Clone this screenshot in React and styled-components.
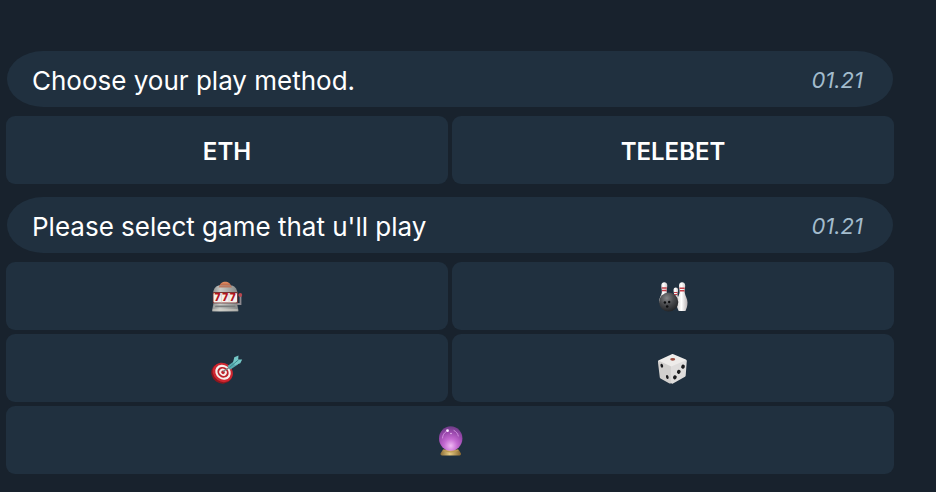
import React from 'react'
import styled, { createGlobalStyle } from 'styled-components'

const GlobalStyle = createGlobalStyle`
    *{
        box-sizing: border-box;
    }
    body{
        margin: 0;
        background: #18222d;
        font-family: Inter, Roboto, sans-serif;
        color: #fff;
    }
`;

function SlotMachine() {
    return (
        <Emoji viewBox="0 0 32 32" aria-hidden="true">
            <defs>
                <linearGradient id="slotBody" x1="0" y1="0" x2="1" y2="0">
                    <stop offset="0" stopColor="#8f9291" />
                    <stop offset=".3" stopColor="#c9cbc7" />
                    <stop offset="1" stopColor="#858887" />
                </linearGradient>
                <linearGradient id="slotDome" x1="0" y1="0" x2="0" y2="1">
                    <stop offset="0" stopColor="#e99468" />
                    <stop offset="1" stopColor="#a9573f" />
                </linearGradient>
            </defs>
            <path d="M26 24h3.5V16" fill="none" stroke="#8d8990" strokeWidth="1.8" />
            <circle cx="29.3" cy="15" r="1.9" fill="#b8474f" />
            <path d="M8.500 6.500c0-6.500 11.500-6.500 11.500 0z" fill="url(#slotDome)" />
            <path d="M2 13.500C2.500 8 5.500 5.500 8.500 5.500H20c3 0 6 2.500 6.500 8v10H2z" fill="url(#slotBody)" />
            <path d="M8.500 5.500H20l1 2H7.500z" fill="#b9775f" />
            <rect x="1.800" y="12" width="25" height="11.500" rx="1" fill="#7d3432" />
            <rect x="2.500" y="13" width="23.500" height="9.500" rx="1" fill="#f4f0eb" />
            <path d="M10.500 13v9.500M18 13v9.500" stroke="#c9c4c1" strokeWidth=".5" />
            <g fill="#b3161f" fontFamily="Inter, sans-serif" fontWeight="900" fontSize="10" textAnchor="middle">
                <text x="6.6" y="21.400">7</text>
                <text x="14.2" y="21.400">7</text>
                <text x="21.8" y="21.400">7</text>
            </g>
            <path d="M2.500 23.500h23.500L27.500 30.500c0 .6-.3 1-1 1H2c-.7 0-1-.4-1-1z" fill="url(#slotBody)" />
            <path d="M4.500 25.500h19.500l.8 1.800H3.800z" fill="#7a7d7d" />
            <path d="M1.800 30h25" stroke="#d5d2c9" strokeWidth="1" />
        </Emoji>
    )
}

function Bowling() {
    return (
        <Emoji viewBox="0 0 32 32" aria-hidden="true">
            <defs>
                <linearGradient id="pin" x1="0" y1="0" x2="1" y2="0">
                    <stop offset="0" stopColor="#d5d1d0" />
                    <stop offset=".45" stopColor="#fff" />
                    <stop offset="1" stopColor="#b9b3b5" />
                </linearGradient>
                <radialGradient id="ball" cx=".4" cy=".3" r=".7">
                    <stop offset="0" stopColor="#858688" />
                    <stop offset=".5" stopColor="#4b4c4f" />
                    <stop offset="1" stopColor="#242528" />
                </radialGradient>
            </defs>
            <path d="M4.300 5.500c0-4.300 6-4.300 6 0 0 2.500-1 4.500-.5 7 .5 3 2.500 6 2 10H2.300c-.5-4 2-7 2.500-10 .3-2.500-.5-4.500-.5-7z" fill="url(#pin)" />
            <path d="M4.800 8h5M5 10.500h4.600" stroke="#c5404a" strokeWidth="1.400" />
            <path d="M16.500 10c0-3.300 4.600-3.300 4.600 0 0 2-1 3.500-.5 5.500.5 2.500 2 5 1.500 8h-7c-.5-3 1.400-5.500 1.900-8 .3-2-.5-3.500-.5-5.500z" fill="url(#pin)" />
            <path d="M17 12.500h3.600M17 14.500h3.600" stroke="#c5404a" strokeWidth="1" />
            <path d="M22 5.500c0-4.300 6.200-4.300 6.200 0 0 2.700-1 4.500-.4 7.500.5 3 2.700 5.500 2.700 9.500 0 3.500-1 6-2 8.500h-6.800c-1.200-2.500-2.200-5-2.200-8.500 0-4 2.500-6.500 3-9.500.4-3-.5-4.800-.5-7.500z" fill="url(#pin)" />
            <path d="M22.500 8.200h5.200M22.800 10.800h4.700" stroke="#c5404a" strokeWidth="1.400" />
            <circle cx="11.700" cy="22" r="9.600" fill="url(#ball)" />
            <circle cx="7.900" cy="22.500" r="1.200" fill="#0c0d0f" />
            <circle cx="12.200" cy="22" r="1.200" fill="#0c0d0f" />
            <circle cx="10.200" cy="26.500" r="1.300" fill="#0c0d0f" />
        </Emoji>
    )
}

function Dart() {
    return (
        <Emoji viewBox="0 0 32 32" aria-hidden="true">
            <g transform="rotate(35 11.500 20.500)">
                <ellipse cx="11.500" cy="21.800" rx="10.800" ry="9.800" fill="#8d171e" />
                <ellipse cx="11.700" cy="20.300" rx="10.500" ry="9.300" fill="#cf2630" />
                <ellipse cx="11.800" cy="20" rx="8.100" ry="7.100" fill="#f6eeeb" />
                <ellipse cx="11.800" cy="20" rx="5.900" ry="5.100" fill="#bd222b" />
                <ellipse cx="11.800" cy="20" rx="3.900" ry="3.400" fill="#f6eeeb" />
                <ellipse cx="11.800" cy="20" rx="1.900" ry="1.700" fill="#bd222b" />
            </g>
            <path d="M12 19.500l7-4.500" stroke="#6f8487" strokeWidth="1.200" />
            <path d="M16.500 14l7.600-5.600 2.900 4-8 5.400z" fill="#58aab0" />
            <path d="M22 10.500l1.300-5.300 4.200-1.700-.3 3.900 4 .2-1.900 3.700-5.300 2z" fill="#74c6c6" />
            <path d="M18.500 15.500l9-7.700" stroke="#358388" strokeWidth=".9" />
        </Emoji>
    )
}

function Dice() {
    return (
        <Emoji viewBox="0 0 32 32" aria-hidden="true">
            <g strokeWidth="2.800" strokeLinejoin="round">
                <path d="M2.400 9.600L15.300 3.400 28.300 8.900 14.300 14.200z" fill="#eeecea" stroke="#eeecea" />
                <path d="M2.400 10.600L13.200 15.500v14.700L4.200 25.300z" fill="#d2d0ce" stroke="#d2d0ce" />
                <path d="M15.300 15.500L28.300 10l-1 13.500-12 6.700z" fill="#dfdddc" stroke="#dfdddc" />
            </g>
            <ellipse cx="15.700" cy="7.300" rx="2.500" ry="1.400" fill="#9a4b3d" />
            <g fill="#1b1b1d">
                <ellipse cx="4.800" cy="13.700" rx="1.300" ry="2" transform="rotate(-15 4.800 13.700)" />
                <ellipse cx="10.300" cy="25" rx="1.300" ry="2" transform="rotate(-15 10.300 25)" />
                <ellipse cx="26" cy="14.700" rx="1.800" ry="2.100" transform="rotate(25 26 14.700)" />
                <ellipse cx="21.800" cy="19.800" rx="1.800" ry="2.100" transform="rotate(25 21.800 19.800)" />
                <ellipse cx="17.900" cy="25.300" rx="1.800" ry="2.100" transform="rotate(25 17.900 25.300)" />
            </g>
        </Emoji>
    )
}

function CrystalBall() {
    return (
        <Emoji viewBox="0 0 32 32" aria-hidden="true">
            <defs>
                <radialGradient id="crystal" cx=".5" cy=".8" r=".8">
                    <stop offset="0" stopColor="#f0b8f4" />
                    <stop offset=".35" stopColor="#c56bd2" />
                    <stop offset=".7" stopColor="#9a48ad" />
                    <stop offset="1" stopColor="#6d3c86" />
                </radialGradient>
                <linearGradient id="gold" x1="0" y1="0" x2="1" y2="0">
                    <stop offset="0" stopColor="#8a6c38" />
                    <stop offset=".45" stopColor="#e8cc83" />
                    <stop offset="1" stopColor="#84642f" />
                </linearGradient>
            </defs>
            <path d="M9 25.500h15.500l2.500 4c.2 1.200-.5 2-1.500 2H8c-1 0-1.700-.8-1.500-2z" fill="url(#gold)" />
            <ellipse cx="16.700" cy="14.500" rx="11.700" ry="12.200" fill="url(#crystal)" />
            <path d="M9.500 26c4 2.600 10.500 2.600 14.500 0" fill="none" stroke="#bf9b55" strokeWidth="1.300" />
            <circle cx="13.500" cy="6.700" r="1.400" fill="#fbe9ff" />
            <path d="M8.500 14c.2-3 1.500-5 3.500-6.300M20 6.500c2.300 1.200 3.800 3 4.300 5.500" fill="none" stroke="#cf8fdd" strokeWidth="1" strokeLinecap="round" />
            <circle cx="17" cy="9.500" r=".7" fill="#f8d8fc" />
        </Emoji>
    )
}

const messages = [
    {
        text: 'Choose your play method.',
        time: '01.21',
        buttons: [
            { label: 'ETH' },
            { label: 'TELEBET' }
        ]
    },
    {
        text: "Please select game that u'll play",
        time: '01.21',
        buttons: [
            { label: 'Slot machine', icon: <SlotMachine /> },
            { label: 'Bowling', icon: <Bowling /> },
            { label: 'Darts', icon: <Dart /> },
            { label: 'Dice', icon: <Dice /> },
            { label: 'Crystal ball', icon: <CrystalBall />, wide: true }
        ]
    }
]

function Message({ text, time, buttons }) {
    return (
        <MessageStyled>
            <Bubble>
                <p>{text}</p>
                <time>{time}</time>
            </Bubble>
            <Keyboard>
                {buttons.map(({ label, icon, wide }) => (
                    <KeyButton
                        key={label}
                        type="button"
                        $wide={wide}
                        aria-label={icon ? label : undefined}
                    >
                        {icon || <KeyLabel>{label}</KeyLabel>}
                    </KeyButton>
                ))}
            </Keyboard>
        </MessageStyled>
    )
}

function App() {
    return (
        <>
            <GlobalStyle />
            <Chat>
                {messages.map(message => (
                    <Message key={message.text} {...message} />
                ))}
            </Chat>
        </>
    )
}

const Chat = styled.main`
    display: flex;
    flex-direction: column;
    gap: 13px;
    padding: 51px 42px 18px 6px;
`;

const MessageStyled = styled.section`
    display: flex;
    flex-direction: column;
    gap: 9px;
`;

const Bubble = styled.div`
    display: flex;
    align-items: flex-start;
    justify-content: space-between;
    gap: 24px;
    min-height: 56px;
    margin: 0 1px;
    padding: 12px 30px 8px 25px;
    border-radius: 36px / 28px;
    background: #20303f;
    p{
        margin: 0;
        font-size: 26px;
        line-height: 36px;
    }
    time{
        font-size: 22px;
        font-style: italic;
        line-height: 34px;
        color: #a3bccd;
    }
`;

const Keyboard = styled.div`
    display: grid;
    grid-template-columns: 1fr 1fr;
    gap: 4px;
`;

const KeyButton = styled.button`
    display: flex;
    align-items: center;
    justify-content: center;
    height: 68px;
    padding: 0 16px;
    grid-column: ${({ $wide }) => $wide ? '1 / -1' : 'auto'};
    border: none;
    border-radius: 9px;
    background: #20303f;
    color: #fff;
    font-family: inherit;
    font-size: 24px;
    font-weight: 600;
    line-height: 32px;
    cursor: pointer;
    &:hover{
        background: #283a4c;
    }
`;

const KeyLabel = styled.span`
    padding-top: 4px;
`;

const Emoji = styled.svg`
    display: block;
    width: 32px;
    height: 32px;
`;

export default App
